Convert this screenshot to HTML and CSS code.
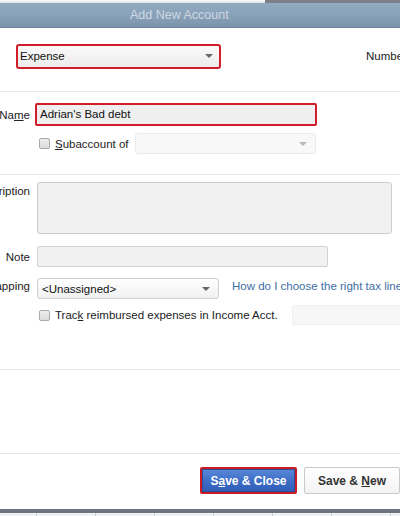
FILE: index.html
```html
<!DOCTYPE html>
<html>
<head>
<meta charset="utf-8">
<link rel="stylesheet" href="styles.css">
</head>
<body>
<div class="dialog">
  <div class="strip"><span class="strip-light"></span><span class="strip-dark"></span></div>
  <div class="titlebar">Add New Account</div>

  <div class="head">
    <div class="select select-type hl">
      <span>Expense</span>
      <span class="caret"></span>
    </div>
    <span class="number">Number</span>
  </div>

  <div class="section names">
    <div class="row">
      <label class="lbl lbl-name">Na<u>m</u>e</label>
      <div class="input input-name hl">Adrian's Bad debt</div>
    </div>
    <div class="row sub-row">
      <span class="lbl"></span>
      <span class="check"></span>
      <span class="check-text"><u>S</u>ubaccount of</span>
      <div class="select select-sub disabled"><span></span><span class="caret light"></span></div>
    </div>
  </div>

  <div class="section details">
    <div class="row desc-row">
      <label class="lbl lbl-top">Description</label>
      <div class="textarea"></div>
    </div>
    <div class="row note-row">
      <label class="lbl">Note</label>
      <div class="input input-note"></div>
    </div>
    <div class="row map-row">
      <label class="lbl">Tax-Line Mapping</label>
      <div class="select select-map"><span>&lt;Unassigned&gt;</span><span class="caret"></span></div>
      <a class="link">How do I choose the right tax line?</a>
    </div>
    <div class="row track-row">
      <span class="lbl"></span>
      <span class="check"></span>
      <span class="check-text track-text">Trac<u>k</u> reimbursed expenses in Income Acct.</span>
      <div class="input input-income"></div>
    </div>
  </div>

  <div class="section empty"></div>

  <div class="footer">
    <button class="btn btn-primary">S<u>a</u>ve &amp; Close</button>
    <button class="btn btn-secondary">Save &amp; <u>N</u>ew</button>
  </div>

  <div class="bottombar"></div>
  <div class="grid-strip">
    <span></span><span></span><span></span><span></span><span></span><span></span><span></span><span></span>
  </div>
</div>
</body>
</html>
```

FILE: styles.css
```css
html, body {
  margin: 0;
  padding: 0;
}
body {
  width: 400px;
  height: 516px;
  overflow: hidden;
  background: #ffffff;
  font-family: "Liberation Sans", Arial, sans-serif;
  font-size: 11.5px;
  color: #222;
}
.dialog {
  display: flex;
  flex-direction: column;
  width: 400px;
  height: 516px;
}
.strip {
  display: flex;
  height: 3px;
}
.strip-light {
  width: 265px;
  background: linear-gradient(#ffffff, #d9dde2);
}
.strip-dark {
  flex: 1;
  background: #7b8089;
}
.titlebar {
  height: 24px;
  line-height: 24px;
  padding-left: 130px;
  color: #cdd8e3;
  font-size: 12.5px;
  background: linear-gradient(#92aac0, #8aa2b9 50%, #7b93ab);
  border-bottom: 1px solid #6f8499;
}
.head {
  display: flex;
  align-items: center;
  height: 64px;
  padding: 0 0 7px 16px;
  border-bottom: 1px solid #e7e7e7;
  box-sizing: border-box;
  white-space: nowrap;
}
.hl {
  border: 2px solid #d01d29 !important;
  border-radius: 2px;
}
.select {
  display: flex;
  align-items: center;
  justify-content: space-between;
  flex: none;
  box-sizing: border-box;
  border: 1px solid #c9c9c9;
  border-radius: 3px;
  background: linear-gradient(#fafafa, #ececec);
  padding: 0 8px 0 4px;
  color: #111;
}
.select-type {
  width: 205px;
  height: 25px;
  padding-left: 2px;
  padding-right: 6px;
}
.caret {
  width: 0;
  height: 0;
  border-left: 4px solid transparent;
  border-right: 4px solid transparent;
  border-top: 4px solid #666;
}
.caret.light {
  border-top-color: #b8b8b8;
}
.number {
  margin-left: 145px;
  color: #222;
}
.section {
  border-bottom: 1px solid #e7e7e7;
  box-sizing: border-box;
}
.row {
  display: flex;
  align-items: center;
  white-space: nowrap;
}
.lbl {
  width: 30px;
  flex: none;
  display: flex;
  justify-content: flex-end;
  white-space: nowrap;
  color: #222;
  margin-right: 7px;
}
.lbl-name {
  width: 30px;
  margin-right: 5px;
}
.names {
  height: 83px;
  padding-top: 11px;
}
.input {
  flex: none;
  box-sizing: border-box;
  border: 1px solid #cfcfcf;
  border-radius: 2px;
  background: #f1f1f1;
}
.input-name {
  width: 282px;
  height: 23px;
  line-height: 19px;
  padding-left: 3px;
  background: #efefef;
  color: #111;
}
.sub-row {
  margin-top: 7px;
}
.check {
  width: 11px;
  height: 11px;
  flex: none;
  margin-left: 2px;
  box-sizing: border-box;
  border: 1px solid #a9a9a9;
  border-radius: 2px;
  background: linear-gradient(#eeeeee, #dcdcdc);
}
.check-text {
  margin-left: 5px;
  color: #222;
  white-space: nowrap;
}
.select-sub {
  width: 181px;
  height: 21px;
  margin-left: 6px;
  background: #f8f8f8;
  border-color: #ececec;
}
.details {
  height: 195px;
  padding-top: 7px;
}
.desc-row {
  align-items: flex-start;
}
.lbl-top {
  padding-top: 3px;
}
.textarea {
  width: 355px;
  height: 52px;
  flex: none;
  box-sizing: border-box;
  border: 1px solid #cdcdcd;
  border-radius: 3px;
  background: #f0f0f0;
}
.note-row {
  margin-top: 12px;
}
.input-note {
  width: 291px;
  height: 21px;
  border-color: #d2d2d2;
}
.map-row {
  margin-top: 11px;
}
.map-row .lbl {
  position: relative;
  top: -3px;
}
.select-map {
  width: 182px;
  height: 21px;
  background: linear-gradient(#ffffff, #f1f1f1);
  border-color: #cfcfcf;
  padding-left: 4px;
}
.link {
  margin-left: 13px;
  color: #3d6ea5;
  white-space: nowrap;
  position: relative;
  top: -3px;
}
.track-row {
  margin-top: 6px;
}
.input-income {
  margin-left: 14px;
  width: 110px;
  height: 20px;
  border-color: #efefef;
  background: #f7f7f7;
}
.empty {
  height: 84px;
}
.footer {
  display: flex;
  justify-content: flex-end;
  align-items: flex-start;
  gap: 7px;
  height: 55px;
  padding-top: 13px;
  box-sizing: border-box;
}
.btn {
  font-family: "Liberation Sans", Arial, sans-serif;
  font-size: 12px;
  font-weight: bold;
  height: 27px;
  box-sizing: border-box;
  border-radius: 2px;
  padding: 0;
  cursor: default;
}
.btn-primary {
  width: 97px;
  color: #ffffff;
  border: 2px solid #c91a26;
  background: linear-gradient(#5a8ad8, #3d6cc6 55%, #2f5db8);
  box-shadow: inset 0 0 0 1px #2a4f9a;
}
.btn-secondary {
  width: 96px;
  color: #333;
  border: 1px solid #c9c9c9;
  background: linear-gradient(#ffffff, #f3f3f3);
}
.bottombar {
  height: 4px;
  background: #6f7580;
}
.grid-strip {
  flex: 1;
  display: flex;
  padding-left: 36px;
  background: #eef1f4;
}
.grid-strip span {
  width: 59px;
  flex: none;
  border-left: 1px solid #c8ced6;
  box-sizing: border-box;
}
```
